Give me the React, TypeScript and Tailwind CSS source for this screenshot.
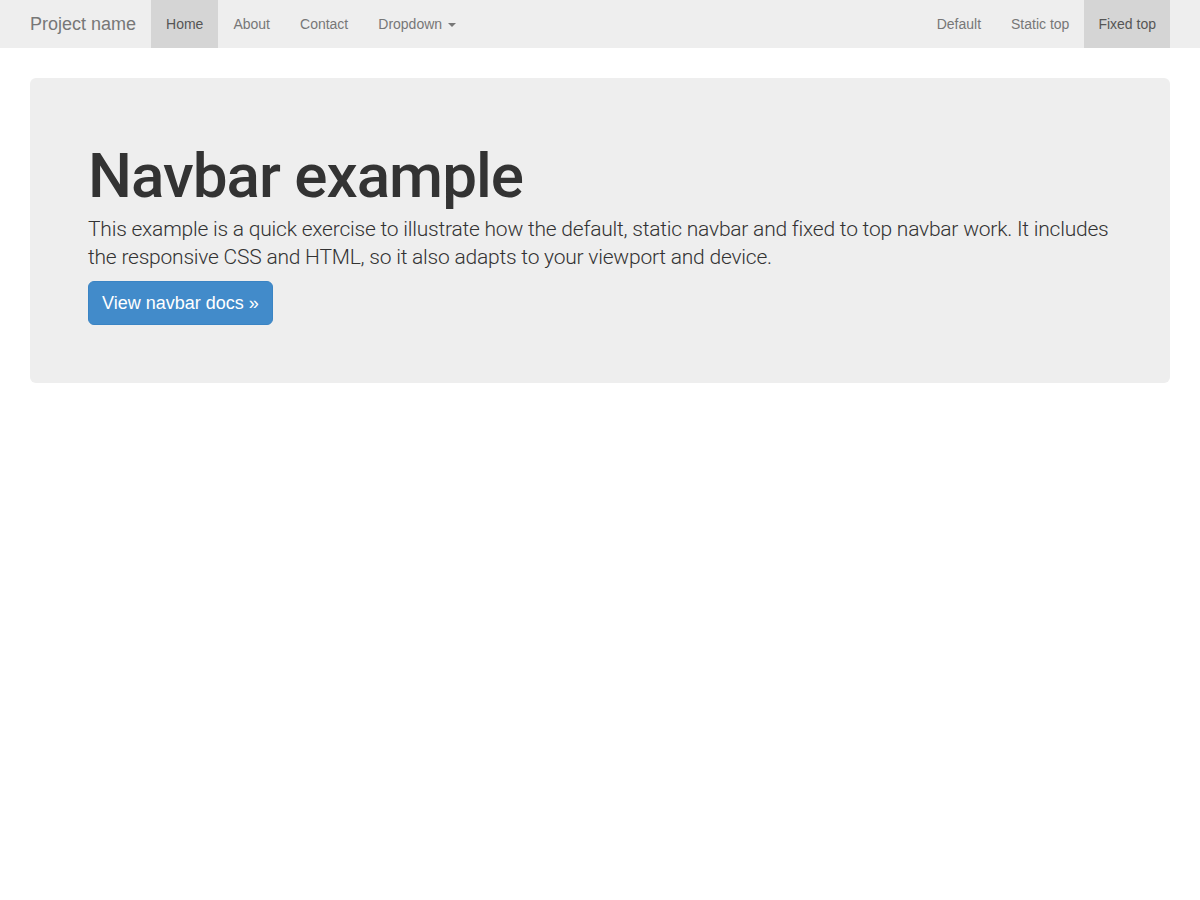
export default function App() {
  const left = ["About", "Contact"];
  return (
    <div className="min-h-[900px] bg-white text-[#333] [font-family:'Liberation_Sans',Arial,sans-serif]">
      {/* Navbar */}
      <nav className="h-12 bg-[#eeeeee]">
        <div className="mx-auto flex h-full w-[1170px] items-stretch justify-between px-[15px]">
          <div className="flex items-stretch">
            <a className="flex items-center pt-px pr-[15px] text-[18px] text-[#777]">Project name</a>
            <a className="flex items-center bg-[#d5d5d5] px-[15px] pt-px text-[14px] text-[#555]">Home</a>
            {left.map((l) => (
              <a key={l} className="flex items-center px-[15px] pt-px text-[14px] text-[#777]">
                {l}
              </a>
            ))}
            <a className="flex items-center px-[15px] pt-px text-[14px] text-[#777]">
              Dropdown
              <span className="ml-[6px] inline-block h-0 w-0 border-x-[4px] border-t-[4px] border-x-transparent border-t-[#777]" />
            </a>
          </div>
          <div className="flex items-stretch">
            <a className="flex items-center px-[15px] pt-px text-[14px] text-[#777]">Default</a>
            <a className="flex items-center px-[15px] pt-px text-[14px] text-[#777]">Static top</a>
            <a className="flex items-center bg-[#d5d5d5] px-[14px] pt-px text-[14px] text-[#555]">Fixed top</a>
          </div>
        </div>
      </nav>

      {/* Jumbotron */}
      <div className="mx-auto mt-[30px] w-[1170px] px-[15px]">
        <div className="rounded-[6px] bg-[#eeeeee] px-[58px] pt-[58px] pb-[58px]">
          <h1 className="mt-[6px] text-[62px] leading-[68px] font-medium tracking-[-1px] text-[#333] [font-family:Roboto,'Liberation_Sans',sans-serif]">
            Navbar example
          </h1>
          <p className="mt-[5px] text-[21px] leading-[28px] font-light tracking-[-0.22px] text-[#333] [font-family:Roboto,'Liberation_Sans',sans-serif]">
            This example is a quick exercise to illustrate how the default, static navbar and fixed to top navbar
            work. It includes the responsive CSS and HTML, so it also adapts to your viewport and device.
          </p>
          <a className="mt-[10px] inline-block rounded-[6px] border border-[#3a84c4] bg-[#428bca] px-[13px] py-[9px] text-[18px] leading-[24px] text-white">
            View navbar docs &raquo;
          </a>
        </div>
      </div>
    </div>
  );
}
